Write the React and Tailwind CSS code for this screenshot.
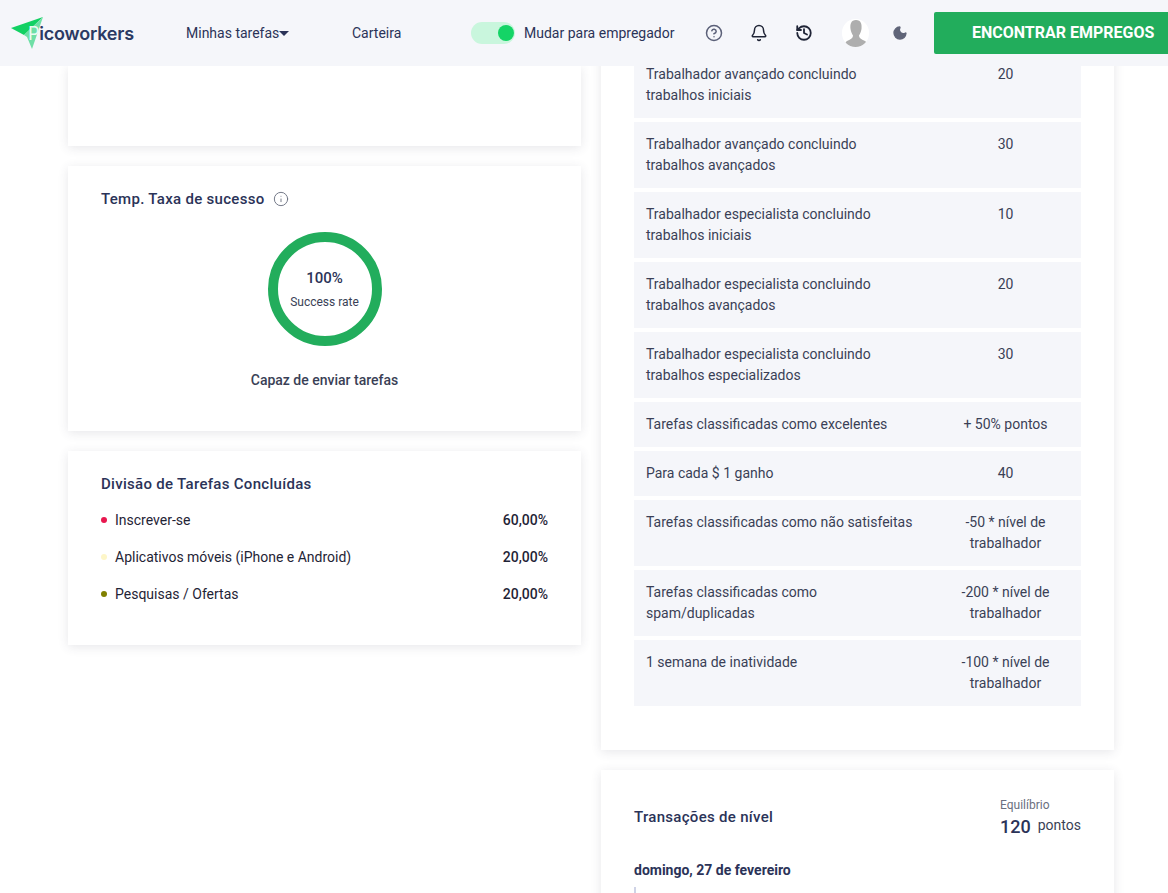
import { CircleHelp, Bell, History, Info, Moon } from 'lucide-react';

const levelRows = [
	['Trabalhador avançado concluindo trabalhos iniciais', '20'],
	['Trabalhador avançado concluindo trabalhos avançados', '30'],
	['Trabalhador especialista concluindo trabalhos iniciais', '10'],
	['Trabalhador especialista concluindo trabalhos avançados', '20'],
	['Trabalhador especialista concluindo trabalhos especializados', '30'],
	['Tarefas classificadas como excelentes', '+ 50% pontos'],
	['Para cada $ 1 ganho', '40'],
	['Tarefas classificadas como não satisfeitas', '-50 * nível de trabalhador'],
	['Tarefas classificadas como spam/duplicadas', '-200 * nível de trabalhador'],
	['1 semana de inatividade', '-100 * nível de trabalhador'],
];

const divisions = [
	{ name: 'Inscrever-se', value: '60,00%', dot: 'bg-[#e8174f]' },
	{ name: 'Aplicativos móveis (iPhone e Android)', value: '20,00%', dot: 'bg-[#fdf6c8]' },
	{ name: 'Pesquisas / Ofertas', value: '20,00%', dot: 'bg-[#808000]' },
];

const Card = ({ className = '', children }) => (
	<div className={`bg-white shadow-[0_2px_10px_rgba(60,60,80,0.12)] ${className}`}>{children}</div>
);

const Logo = () => (
	<div className="relative ml-[10px] h-[34px] w-[115px] flex-none">
		<svg className="absolute left-0 top-0" width="34" height="34" viewBox="0 0 34 34">
			<path d="M1 12 L33 1 L14 19 Z" fill="#12d163" />
			<path d="M33 1 L14 19 L17 21 L22 33 Z" fill="#6fdfa6" />
		</svg>
		<span className="absolute left-[18px] top-[7px] text-[18px] font-semibold leading-[22px] tracking-[-0.2px] text-[#2b3a63] [font-family:Inter,sans-serif]">
			<span className="font-normal text-[#eafaf2]">P</span>icoworkers
		</span>
	</div>
);

const Avatar = () => (
	<div className="flex h-[28px] w-[27px] items-end justify-center overflow-hidden rounded-full bg-white">
		<svg width="24" height="28" viewBox="0 0 24 28">
			<path d="M12 1 C7 1 6 5 6.5 10 C7 13 8 15 9 16.5 C9 19 7 20 3 22 C1 23 1 25 1 28 L23 28 C23 25 23 23 21 22 C17 20 15 19 15 16.5 C16 15 17 13 17.5 10 C18 5 17 1 12 1 Z" fill="#aeaeae" />
		</svg>
	</div>
);

const Header = () => (
	<header className="relative z-10 flex h-[66px] w-full items-center overflow-hidden bg-[#f5f6fa]">
		<Logo />
		<div className="ml-[61px] flex w-[166px] flex-none items-center text-[14px] text-[#2b3358]">
			Minhas tarefas
			<span className="mt-[1px] h-0 w-0 border-x-[5px] border-t-[5px] border-x-transparent border-t-[#2b3358]" />
		</div>
		<div className="w-[119px] flex-none text-[14px] text-[#2b3358]">Carteira</div>
		<div className="relative h-[22px] w-[44px] flex-none rounded-full bg-[#c9f6dd]">
			<span className="absolute right-[1px] top-[3px] h-[16px] w-[16px] rounded-full bg-[#14d466]" />
		</div>
		<div className="ml-[9px] w-[152px] flex-none whitespace-nowrap text-[14px] text-[#2b3358]">Mudar para empregador</div>
		<CircleHelp className="ml-[29px] flex-none text-[#5b6078]" size={18} strokeWidth={2} />
		<Bell className="ml-[27px] flex-none text-[#1f2436]" size={18} strokeWidth={2} />
		<History className="ml-[27px] flex-none text-[#1f2436]" size={18} strokeWidth={2.4} />
		<div className="ml-[29px] flex-none"><Avatar /></div>
		<Moon className="ml-[23px] flex-none fill-[#5f6478] text-[#5f6478]" size={16} />
		<button className="ml-[26px] h-[42px] flex-none rounded-[2px] bg-[#22ad5c] px-[38px] text-[16px] font-bold text-white">
			ENCONTRAR EMPREGOS
		</button>
	</header>
);

const SuccessCard = () => (
	<Card className="mt-[20px] h-[265px] px-[33px] pt-[24px]">
		<div className="flex h-[18px] items-center text-[15px] font-medium tracking-[0.3px] text-[#2b3358]">
			Temp. Taxa de sucesso
			<Info className="ml-[8px] text-[#6b7080]" size={16} strokeWidth={1.4} />
		</div>
		<div className="mt-[24px] flex flex-col items-center">
			<div className="flex h-[114px] w-[114px] flex-col items-center justify-center rounded-full border-[10px] border-[#22ad5c]">
				<div className="text-[15px] font-medium leading-[18px] text-[#2b3358]">100%</div>
				<div className="mt-[8px] text-[12px] leading-[14px] text-[#3a3f56]">Success rate</div>
			</div>
			<div className="mt-[24px] text-[14px] font-medium leading-[20px] text-[#3a3f56]">Capaz de enviar tarefas</div>
		</div>
	</Card>
);

const DivisionCard = () => (
	<Card className="mt-[20px] h-[194px] px-[33px] pt-[24px]">
		<div className="text-[15px] font-medium leading-[18px] tracking-[0.3px] text-[#2b3358]">Divisão de Tarefas Concluídas</div>
		<div className="mt-[9px] flex flex-col">
			{divisions.map((d) => (
				<div key={d.name} className="flex h-[37px] items-center text-[14px] text-[#1f2436]">
					<span className={`mb-[2px] mr-[8px] h-[6px] w-[6px] rounded-full ${d.dot}`} />
					<span className="flex-1">{d.name}</span>
					<span className="font-medium">{d.value}</span>
				</div>
			))}
		</div>
	</Card>
);

const LevelTable = () => (
	<Card className="h-[698px] px-[33px] pt-0">
		<div className="flex flex-col gap-[4px]">
			{levelRows.map(([label, points]) => (
				<div key={label} className="flex bg-[#f5f6fa] py-[12px] text-[14px] leading-[21px] text-[#3a3f56]">
					<div className="w-[296px] flex-none px-[12px]">{label}</div>
					<div className="flex-1 px-[12px] text-center">{points}</div>
				</div>
			))}
		</div>
	</Card>
);

const TransactionsCard = () => (
	<Card className="mt-[20px] h-[200px] px-[33px] pt-[28px]">
		<div className="flex items-start justify-between">
			<div className="mt-[10px] text-[15px] font-medium leading-[18px] tracking-[0.3px] text-[#2b3358]">Transações de nível</div>
			<div className="w-[81px]">
				<div className="text-[12px] leading-[14px] text-[#6b7080]">Equilíbrio</div>
				<div className="mt-[3px] flex items-start">
					<span className="text-[18px] font-medium leading-[24px] text-[#2b3358]">120</span>
					<span className="ml-[7px] text-[14px] leading-[20px] text-[#3a3f56]">pontos</span>
				</div>
			</div>
		</div>
		<div className="mt-[22px] text-[14px] font-bold leading-[18px] text-[#2b3358]">domingo, 27 de fevereiro</div>
		<div className="mt-[8px] h-[20px] w-[2px] bg-[#cfd3e6]" />
	</Card>
);

const App = () => {
	return (
		<div className="h-[893px] w-full overflow-hidden bg-white [font-family:Roboto,sans-serif]">
			<Header />
			<main className="flex gap-[20px] px-[68px]">
				<div className="w-[513px] flex-none">
					<Card className="h-[80px]" />
					<SuccessCard />
					<DivisionCard />
				</div>
				<div className="-mt-[14px] w-[513px] flex-none">
					<LevelTable />
					<TransactionsCard />
				</div>
			</main>
		</div>
	);
};

export default App;
